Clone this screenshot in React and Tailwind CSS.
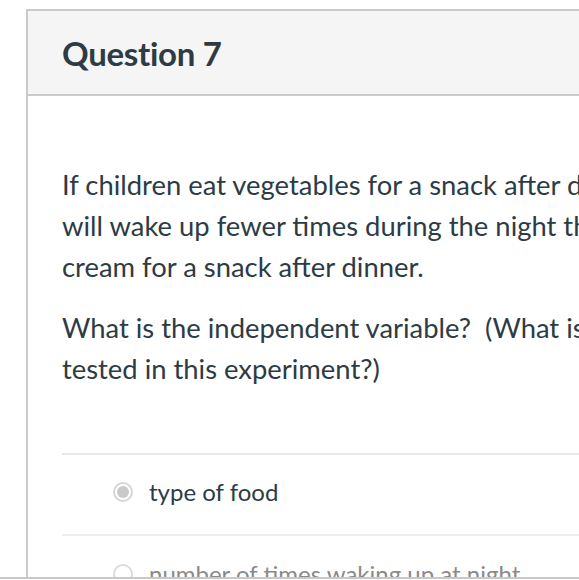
import React from "react";

export default function App() {
  return (
    <div className="w-[579px] h-[580px] flex flex-col bg-white overflow-hidden" style={{ fontFamily: "Lato, 'Open Sans', sans-serif" }}>
      <div className="flex-1 overflow-hidden pt-[9px] pl-[26px]">
        <div className="border-l-2 border-t-2 border-[#cacaca] h-full">
          <div className="h-[85px] bg-[#f5f5f5] border-b-2 border-[#cacaca] flex items-center pl-[34px]">
            <h2 className="text-[33px] leading-[40px] font-bold text-[#2d3b45] tracking-[-0.3px] whitespace-nowrap">Question 7</h2>
          </div>
          <div className="pl-[34px] pt-[68px] text-[27.4px] leading-[41px] text-[#2d3b45]">
            <p className="whitespace-nowrap">If children eat vegetables for a snack after dinner, they</p>
            <p className="whitespace-nowrap">will wake up fewer times during the night than if they eat ice</p>
            <p className="whitespace-nowrap">cream for a snack after dinner.</p>
            <p className="mt-[20px] whitespace-nowrap">What is the independent variable?&nbsp; (What is being</p>
            <p className="whitespace-nowrap">tested in this experiment?)</p>
            <div className="mt-[64px] border-t-2 border-[#e8e8e8] text-[24px] leading-[36px]">
              <div className="h-[81px] pb-[5px] flex items-center pl-[51px] gap-[16px] border-b-2 border-[#eeeeee]">
                <span className="w-[20px] h-[20px] rounded-full border-2 border-[#d6d6d6] flex items-center justify-center">
                  <span className="w-[12px] h-[12px] rounded-full bg-[#c9c9c9]"></span>
                </span>
                <span className="whitespace-nowrap">type of food</span>
              </div>
              <div className="h-[81px] pb-[5px] flex items-center pl-[51px] gap-[16px] text-[#8a8a8a]">
                <span className="w-[20px] h-[20px] rounded-full border-2 border-[#dcdcdc]"></span>
                <span className="whitespace-nowrap">number of times waking up at night</span>
              </div>
            </div>
          </div>
        </div>
      </div>
      <div className="h-[2px] bg-[#c8c8c8]"></div>
      <div className="h-[1px] bg-white"></div>
    </div>
  );
}
